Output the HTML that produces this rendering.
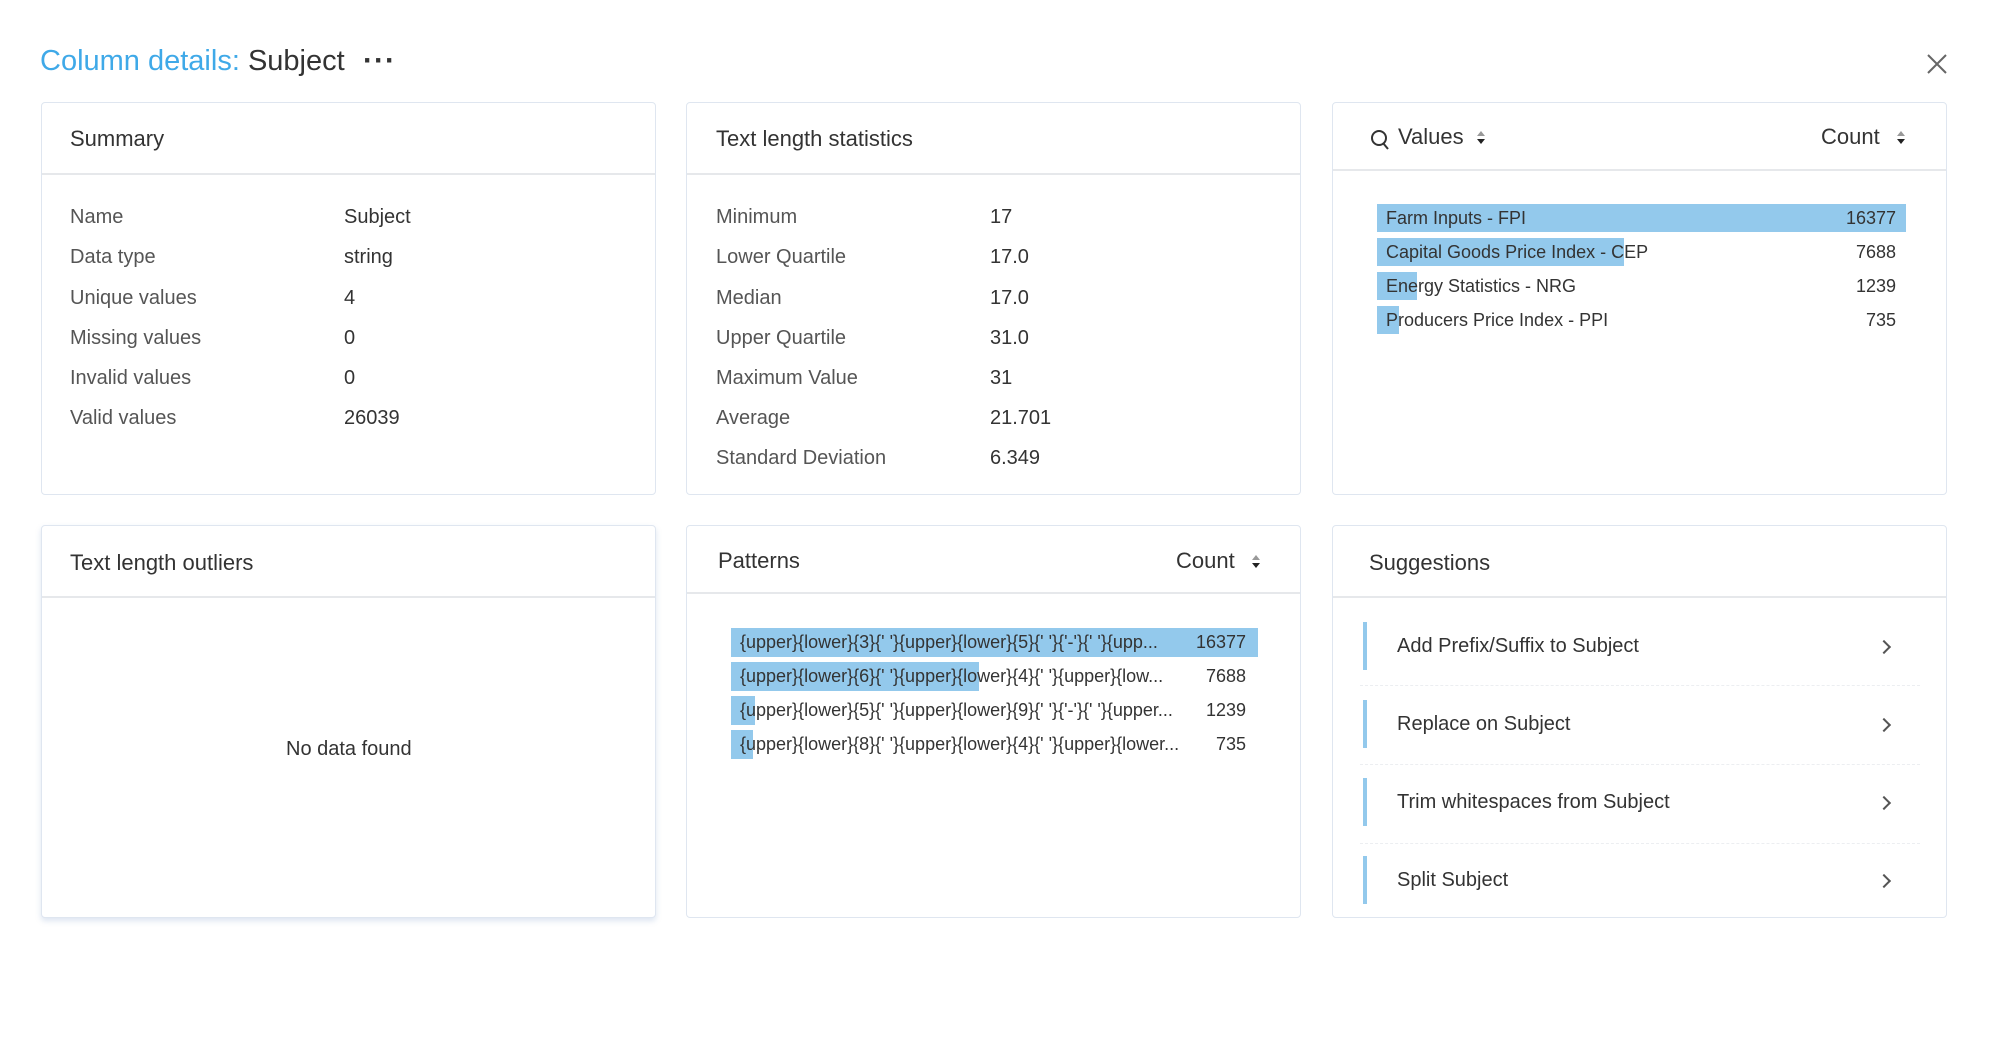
<!DOCTYPE html>
<html><head><meta charset="utf-8"><style>
*{margin:0;padding:0;box-sizing:border-box}
body{width:2000px;height:1045px;background:#fff;font-family:"Liberation Sans",sans-serif;color:#333;position:relative;overflow:hidden}
.a{position:absolute;white-space:nowrap}
.w{position:absolute;top:0;width:2000px;height:1045px}
.p{position:absolute;border:1.5px solid #dfe6f0;border-radius:4px;background:#fff}
.h{position:absolute;left:0;right:0;top:0;height:72px;border-bottom:2px solid #e6e8eb}
.t{font-size:22px;color:#333}
.l{font-size:20px;color:#555}
.v{font-size:20px;color:#333}
.vs{font-size:18px;color:#333}
.bar{position:absolute;background:#93c9ec;height:28px}
.sb{position:absolute;width:4px;background:#93c9ec}
.dot{position:absolute;left:1360px;width:560px;border-top:1.5px dashed #eceef1}
.chev{position:absolute;width:10px;height:10px;border-right:2px solid #555;border-top:2px solid #555;transform:rotate(45deg)}
</style></head><body>
<div class="a" style="left:40px;top:45px;font-size:29px"><span style="color:#3fa9e8">Column details:</span> <span style="color:#333">Subject</span></div>
<div class="a" style="left:363px;top:44px;font-size:30px;font-weight:bold;color:#333;letter-spacing:1px">···</div>
<svg class="a" style="left:1926px;top:53px" width="22" height="22"><path d="M2 2L20 20M20 2L2 20" stroke="#666" stroke-width="2"/></svg>

<div class="w" style="left:0">
<div class="p" style="left:41px;top:102px;width:615px;height:393px"><div class="h"></div></div>
<div class="a t" style="left:70px;top:126px">Summary</div>
<div class="a l" style="left:70px;top:206px">Name</div><div class="a v" style="left:344px;top:206px">Subject</div>
<div class="a l" style="left:70px;top:246px">Data type</div><div class="a v" style="left:344px;top:246px">string</div>
<div class="a l" style="left:70px;top:287px">Unique values</div><div class="a v" style="left:344px;top:287px">4</div>
<div class="a l" style="left:70px;top:327px">Missing values</div><div class="a v" style="left:344px;top:327px">0</div>
<div class="a l" style="left:70px;top:367px">Invalid values</div><div class="a v" style="left:344px;top:367px">0</div>
<div class="a l" style="left:70px;top:407px">Valid values</div><div class="a v" style="left:344px;top:407px">26039</div>
<div class="p" style="left:41px;top:525px;width:615px;height:393px;box-shadow:0 3px 6px rgba(120,150,200,0.25)"><div class="h"></div></div>
<div class="a t" style="left:70px;top:550px">Text length outliers</div>
<div class="a v" style="left:286px;top:738px">No data found</div>
</div>

<div class="w" style="left:-4px">
<div class="p" style="left:690px;top:102px;width:615px;height:393px"><div class="h"></div></div>
<div class="a t" style="left:720px;top:126px">Text length statistics</div>
<div class="a l" style="left:720px;top:206px">Minimum</div><div class="a v" style="left:994px;top:206px">17</div>
<div class="a l" style="left:720px;top:246px">Lower Quartile</div><div class="a v" style="left:994px;top:246px">17.0</div>
<div class="a l" style="left:720px;top:287px">Median</div><div class="a v" style="left:994px;top:287px">17.0</div>
<div class="a l" style="left:720px;top:327px">Upper Quartile</div><div class="a v" style="left:994px;top:327px">31.0</div>
<div class="a l" style="left:720px;top:367px">Maximum Value</div><div class="a v" style="left:994px;top:367px">31</div>
<div class="a l" style="left:720px;top:407px">Average</div><div class="a v" style="left:994px;top:407px">21.701</div>
<div class="a l" style="left:720px;top:447px">Standard Deviation</div><div class="a v" style="left:994px;top:447px">6.349</div>

<div class="p" style="left:690px;top:525px;width:615px;height:393px"><div class="h" style="height:68px"></div></div>
<div class="a t" style="left:722px;top:548px">Patterns</div>
<div class="a t" style="left:1180px;top:548px">Count</div>
<svg class="a" style="left:1255px;top:554px" width="10" height="16"><path d="M1 6L5 1L9 6Z" fill="#999"/><path d="M1 9L5 14L9 9Z" fill="#222"/></svg>
<div class="bar" style="left:735px;top:628px;width:527px;height:29px"></div>
<div class="bar" style="left:735px;top:662px;width:248px;height:29px"></div>
<div class="bar" style="left:735px;top:696px;width:24px;height:29px"></div>
<div class="bar" style="left:735px;top:730px;width:22px;height:29px"></div>
<div class="a vs" style="left:744px;top:632px">{upper}{lower}{3}{' '}{upper}{lower}{5}{' '}{'-'}{' '}{upp...</div><div class="a vs" style="right:750px;top:632px">16377</div>
<div class="a vs" style="left:744px;top:666px">{upper}{lower}{6}{' '}{upper}{lower}{4}{' '}{upper}{low...</div><div class="a vs" style="right:750px;top:666px">7688</div>
<div class="a vs" style="left:744px;top:700px">{upper}{lower}{5}{' '}{upper}{lower}{9}{' '}{'-'}{' '}{upper...</div><div class="a vs" style="right:750px;top:700px">1239</div>
<div class="a vs" style="left:744px;top:734px">{upper}{lower}{8}{' '}{upper}{lower}{4}{' '}{upper}{lower...</div><div class="a vs" style="right:750px;top:734px">735</div>
</div>

<div class="w" style="left:-8px">
<div class="p" style="left:1340px;top:102px;width:615px;height:393px"><div class="h" style="height:68px"></div></div>
<svg class="a" style="left:1378px;top:129px" width="20" height="22"><circle cx="9" cy="9" r="7" fill="none" stroke="#333" stroke-width="2"/><path d="M13 14L18 20" stroke="#333" stroke-width="2"/></svg>
<div class="a t" style="left:1406px;top:124px">Values</div>
<svg class="a" style="left:1484px;top:130px" width="10" height="16"><path d="M1 6L5 1L9 6Z" fill="#999"/><path d="M1 9L5 14L9 9Z" fill="#222"/></svg>
<div class="a t" style="left:1829px;top:124px">Count</div>
<svg class="a" style="left:1904px;top:130px" width="10" height="16"><path d="M1 6L5 1L9 6Z" fill="#999"/><path d="M1 9L5 14L9 9Z" fill="#222"/></svg>
<div class="bar" style="left:1385px;top:204px;width:529px"></div>
<div class="bar" style="left:1385px;top:238px;width:247px"></div>
<div class="bar" style="left:1385px;top:272px;width:40px"></div>
<div class="bar" style="left:1385px;top:306px;width:22px"></div>
<div class="a vs" style="left:1394px;top:208px">Farm Inputs - FPI</div><div class="a vs" style="right:96px;top:208px">16377</div>
<div class="a vs" style="left:1394px;top:242px">Capital Goods Price Index - CEP</div><div class="a vs" style="right:96px;top:242px">7688</div>
<div class="a vs" style="left:1394px;top:276px">Energy Statistics - NRG</div><div class="a vs" style="right:96px;top:276px">1239</div>
<div class="a vs" style="left:1394px;top:310px">Producers Price Index - PPI</div><div class="a vs" style="right:96px;top:310px">735</div>

<div class="p" style="left:1340px;top:525px;width:615px;height:393px"><div class="h"></div></div>
<div class="a t" style="left:1377px;top:550px">Suggestions</div>
<div class="sb" style="left:1371px;top:622px;height:48px"></div>
<div class="sb" style="left:1371px;top:700px;height:48px"></div>
<div class="sb" style="left:1371px;top:778px;height:48px"></div>
<div class="sb" style="left:1371px;top:856px;height:48px"></div>
<div class="dot" style="left:1368px;top:685px"></div><div class="dot" style="left:1368px;top:764px"></div><div class="dot" style="left:1368px;top:843px"></div>
<div class="a v" style="left:1405px;top:635px">Add Prefix/Suffix to Subject</div>
<div class="a v" style="left:1405px;top:713px">Replace on Subject</div>
<div class="a v" style="left:1405px;top:791px">Trim whitespaces from Subject</div>
<div class="a v" style="left:1405px;top:869px">Split Subject</div>
<div class="chev" style="left:1887px;top:642px"></div>
<div class="chev" style="left:1887px;top:720px"></div>
<div class="chev" style="left:1887px;top:798px"></div>
<div class="chev" style="left:1887px;top:876px"></div>
</div>
</body></html>
